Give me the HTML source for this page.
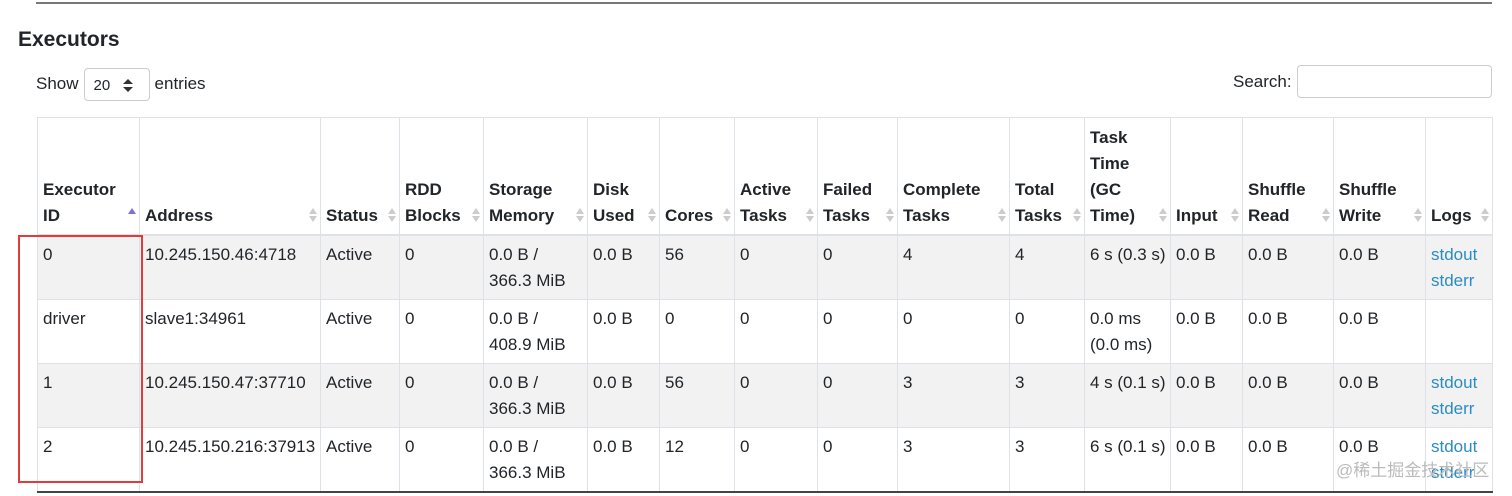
<!DOCTYPE html>
<html><head><meta charset="utf-8"><style>
body{margin:0;width:1512px;height:496px;background:#fff;font-family:"Liberation Sans","DejaVu Sans",sans-serif;color:#212529;position:relative;overflow:hidden}
.topline{position:absolute;left:36px;top:2px;width:1456px;height:2px;background:#777}
h4{position:absolute;left:18px;top:28px;margin:0;font-size:21px;font-weight:bold}
.show{position:absolute;left:36px;top:68px;font-size:17px}
.sel{display:inline-block;width:66px;height:33px;border:1px solid #ccc;border-radius:4px;vertical-align:middle;margin:0 5px;position:relative;font-size:15px;line-height:33px;padding-left:9px;box-sizing:border-box}
.sel:after{content:"";position:absolute;right:16px;top:10px;border:5px solid transparent;border-bottom:5px solid #333;border-top:0}
.sel:before{content:"";position:absolute;right:16px;top:18px;border:5px solid transparent;border-top:5px solid #333;border-bottom:0}
.search{position:absolute;left:1233px;top:72px;font-size:17px}
.sbox{position:absolute;left:1297px;top:65px;width:195px;height:33px;border:1px solid #ccc;border-radius:4px;box-sizing:border-box}
table{position:absolute;left:37px;top:117px;width:1455px;border-collapse:collapse;table-layout:fixed;font-size:17px;line-height:26px}
td,th{border:1px solid #dee2e6;padding:6px 5px 5px;vertical-align:top;text-align:left;white-space:nowrap;overflow:visible}
th{white-space:normal;vertical-align:bottom;height:105px;font-weight:bold;position:relative;padding-right:12px;border-bottom:2px solid #dee2e6}
th:after{content:"";position:absolute;right:3px;bottom:12px;border:4px solid transparent;border-top:6px solid #ccc;border-bottom:0}
th:before{content:"";position:absolute;right:3px;bottom:20px;border:4px solid transparent;border-bottom:6px solid #ccc;border-top:0}
th.asc:before{border-bottom-color:#7a72d8}
th.asc:after{display:none}
td{height:52px}
tr.g td{background:#f2f2f2}
tbody tr:last-child td{border-bottom:2px solid #444}
a{color:#2a8cc4;text-decoration:none}
.red{position:absolute;left:18px;top:235px;width:121px;height:244px;border:2px solid #e03c3c}
.wm{position:absolute;left:1336px;top:456px;font-size:17px;color:#bbb;font-family:"Liberation Sans","Noto Sans CJK SC",sans-serif}
</style></head><body>
<div class="topline"></div>
<h4>Executors</h4>
<div class="show">Show<span class="sel">20</span>entries</div>
<div class="search">Search:</div><div class="sbox"></div>
<table>
<colgroup><col style="width:102px"><col style="width:181px"><col style="width:79px"><col style="width:84px"><col style="width:104px"><col style="width:72px"><col style="width:75px"><col style="width:83px"><col style="width:80px"><col style="width:112px"><col style="width:75px"><col style="width:86px"><col style="width:72px"><col style="width:91px"><col style="width:92px"><col style="width:67px"></colgroup>
<thead><tr><th class="asc">Executor ID</th><th>Address</th><th>Status</th><th>RDD Blocks</th><th>Storage Memory</th><th>Disk Used</th><th>Cores</th><th>Active Tasks</th><th>Failed Tasks</th><th>Complete Tasks</th><th>Total Tasks</th><th>Task Time (GC Time)</th><th>Input</th><th>Shuffle Read</th><th>Shuffle Write</th><th>Logs</th></tr></thead>
<tbody>
<tr class="g"><td>0</td><td>10.245.150.46:4718</td><td>Active</td><td>0</td><td>0.0 B /<br>366.3 MiB</td><td>0.0 B</td><td>56</td><td>0</td><td>0</td><td>4</td><td>4</td><td>6 s (0.3 s)</td><td>0.0 B</td><td>0.0 B</td><td>0.0 B</td><td><a>stdout</a><br><a>stderr</a></td></tr>
<tr><td>driver</td><td>slave1:34961</td><td>Active</td><td>0</td><td>0.0 B /<br>408.9 MiB</td><td>0.0 B</td><td>0</td><td>0</td><td>0</td><td>0</td><td>0</td><td>0.0 ms<br>(0.0 ms)</td><td>0.0 B</td><td>0.0 B</td><td>0.0 B</td><td></td></tr>
<tr class="g"><td>1</td><td>10.245.150.47:37710</td><td>Active</td><td>0</td><td>0.0 B /<br>366.3 MiB</td><td>0.0 B</td><td>56</td><td>0</td><td>0</td><td>3</td><td>3</td><td>4 s (0.1 s)</td><td>0.0 B</td><td>0.0 B</td><td>0.0 B</td><td><a>stdout</a><br><a>stderr</a></td></tr>
<tr><td>2</td><td>10.245.150.216:37913</td><td>Active</td><td>0</td><td>0.0 B /<br>366.3 MiB</td><td>0.0 B</td><td>12</td><td>0</td><td>0</td><td>3</td><td>3</td><td>6 s (0.1 s)</td><td>0.0 B</td><td>0.0 B</td><td>0.0 B</td><td><a>stdout</a><br><a>stderr</a></td></tr>
</tbody></table>
<div class="red"></div>
<div class="wm">@稀土掘金技术社区</div>
</body></html>
